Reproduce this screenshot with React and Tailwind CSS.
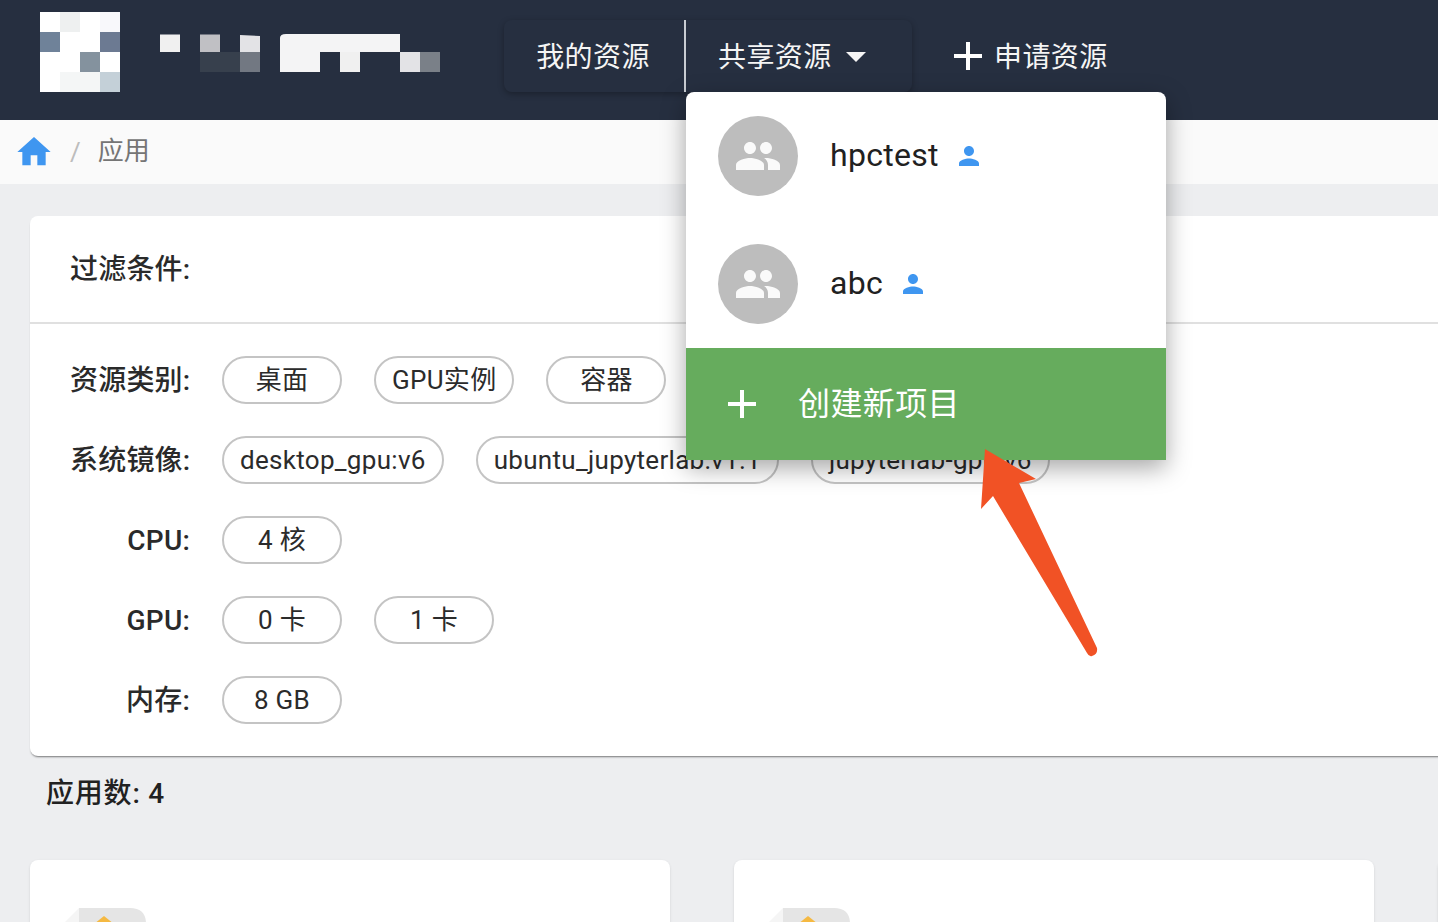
import React from "react";

const font = { fontFamily: 'Roboto, "Noto Sans CJK SC", sans-serif' };
const Logo = () => (
  <svg width="80" height="80" viewBox="0 0 80 80" className="shrink-0">
    <rect width="80" height="80" fill="#fff" />
    <rect x="20" width="20" height="20" fill="#eef0f0" />
    <rect x="60" width="20" height="20" fill="#f8f8fb" />
    <rect y="20" width="20" height="20" fill="#6f8299" />
    <rect x="60" y="20" width="20" height="20" fill="#6c7a92" />
    <rect x="40" y="40" width="20" height="20" fill="#84929e" />
    <rect x="20" y="60" width="40" height="20" fill="#f4f6f6" />
    <rect x="60" y="60" width="20" height="20" fill="#c4d0d8" />
  </svg>
);
const Brand = () => (
  <svg width="280" height="40" viewBox="0 0 280 40" className="shrink-0">
    <rect x="0" y="2.5" width="20" height="17.5" fill="#f0f0f0" />
    <rect x="40" y="2.5" width="20" height="17.5" fill="#c0c0c4" />
    <path d="M80 3L100 4V20H80z" fill="#e3e3e6" />
    <rect x="40" y="20" width="40" height="20" fill="#37404d" />
    <rect x="80" y="20" width="20" height="20" fill="#727882" />
    <path d="M120 6q0-4 6-4h114v18h-80v20h-40z" fill="#f4f4f5" />
    <rect x="180" y="20" width="20" height="20" fill="#f0f0f0" />
    <rect x="240" y="20" width="20" height="20" fill="#e3e3e6" />
    <rect x="260" y="20" width="20" height="20" fill="#7a8088" />
  </svg>
);
const Plus = ({ size = 28, t = 4 }) => (
  <svg width={size} height={size} viewBox={`0 0 ${size} ${size}`} className="shrink-0">
    <rect x="0" y={(size - t) / 2} width={size} height={t} fill="#fff" />
    <rect x={(size - t) / 2} y="0" width={t} height={size} fill="#fff" />
  </svg>
);
const Group = () => (
  <svg width="48" height="48" viewBox="0 0 24 24" fill="#fafafa">
    <path d="M16 11c1.66 0 2.99-1.34 2.99-3S17.66 5 16 5c-1.66 0-3 1.34-3 3s1.34 3 3 3zm-8 0c1.66 0 2.99-1.34 2.99-3S9.66 5 8 5C6.34 5 5 6.34 5 8s1.34 3 3 3zm0 2c-2.33 0-7 1.17-7 3.5V19h14v-2.5c0-2.33-4.67-3.5-7-3.5zm8 0c-.29 0-.62.02-.97.05 1.16.84 1.97 1.97 1.97 3.45V19h6v-2.5c0-2.33-4.67-3.5-7-3.5z" />
  </svg>
);
const Person = () => (
  <svg width="30" height="30" viewBox="0 0 24 24" fill="#3f96f0">
    <path d="M12 12c2.21 0 4-1.79 4-4s-1.79-4-4-4-4 1.79-4 4 1.79 4 4 4zm0 2c-2.67 0-8 1.34-8 4v2h16v-2c0-2.66-5.33-4-8-4z" />
  </svg>
);
const Chip = ({ children }) => (
  <div className="h-12 min-w-[120px] px-4 rounded-3xl border-2 border-[#c4c4c4] flex items-center justify-center text-[26px] tracking-[0.3px] text-[#2b2b2b] whitespace-nowrap">
    {children}
  </div>
);
const Row = ({ label, items }) => (
  <div className="flex items-center gap-8">
    <div className="w-[120px] pt-[2px] text-right text-[28px] tracking-[0.2px] font-medium text-[#2a2a2a] whitespace-nowrap">{label}</div>
    <div className="flex gap-8">
      {items.map((i) => (
        <Chip key={i}>{i}</Chip>
      ))}
    </div>
  </div>
);
const MenuItem = ({ name }) => (
  <div className="h-32 pl-8 flex items-center">
    <div className="w-20 h-20 rounded-full bg-[#bdbdbd] flex items-center justify-center">
      <Group />
    </div>
    <span className="ml-8 pb-[2px] text-[32px] tracking-[0.3px] text-[#212121]">{name}</span>
    <span className="ml-[15px] flex"><Person /></span>
  </div>
);
const FileCard = () => (
  <div className="w-[640px] h-[200px] shrink-0 bg-white rounded-lg shadow-sm pt-12 pl-[34px]">
    <svg width="82" height="40" viewBox="0 0 82 40">
      <path d="M15 0H66q16 0 16 16V40H15z" fill="#e5e5e5" />
      <path d="M15 0V40H0V15z" fill="#f5f5f5" />
      <path d="M40 8l10 8H30z" fill="#f5b942" />
    </svg>
  </div>
);

export default function App() {
  return (
    <div className="relative w-[1438px] h-[922px] overflow-hidden bg-[#edeef0]" style={font}>
      <header className="h-[120px] bg-[#262f40] flex">
        <div className="ml-10 mt-3 flex shrink-0">
          <Logo />
          <div className="ml-10 mt-5"><Brand /></div>
        </div>
        <nav className="ml-16 mt-5 h-[72px] flex text-[28px] tracking-[0.4px] text-[#f5f5f5]">
          <div className="flex rounded-lg shadow-[0_2px_6px_rgba(0,0,0,0.3)]">
            <div className="w-[182px] pt-1 pr-[2px] flex items-center justify-center border-r-[2px] border-[#c8ccd2]">我的资源</div>
            <div className="relative w-[226px] flex items-center pl-8">
              <span className="pt-1">共享资源</span>
              <svg width="20" height="12" viewBox="0 0 20 12" className="ml-[14px] mt-[2px]"><path d="M0 1h20L10 11z" fill="#f5f5f5" /></svg>
              <div className="absolute top-full left-0 w-[480px] tracking-normal bg-white rounded-t-lg shadow-[0_8px_24px_rgba(0,0,0,0.35)] z-10">
                <MenuItem name="hpctest" />
                <MenuItem name="abc" />
                <div className="h-28 bg-[#66ac5d] flex items-center pl-[42px] text-white">
                  <Plus />
                  <span className="ml-[42px] text-[32px] tracking-[0.4px]">创建新项目</span>
                </div>
              </div>
            </div>
          </div>
          <div className="ml-[42px] flex items-center">
            <Plus />
            <span className="ml-[12px] pt-1">申请资源</span>
          </div>
        </nav>
      </header>

      <div className="h-16 bg-[#fafafa] flex items-center pl-[14px] text-[26px] text-[#757575]">
        <svg width="40" height="40" viewBox="0 0 24 24" fill="#3f96f0"><path d="M10 20v-6h4v6h5v-8h3L12 3 2 12h3v8z" /></svg>
        <span className="ml-[16px] text-[#bdbdbd]">/</span>
        <span className="ml-[17px] pb-[2px]">应用</span>
      </div>

      <section className="ml-[30px] mt-8 w-[1500px] bg-white rounded-lg shadow-[0_2px_2px_-1px_rgba(0,0,0,0.5)]">
        <div className="h-[108px] pl-10 pt-[2px] flex items-center border-b-2 border-[#e0e0e0] text-[28px] tracking-[0.2px] font-medium text-[#2a2a2a]">过滤条件:</div>
        <div className="pl-10 py-8 flex flex-col gap-8">
          <Row label="资源类别:" items={["桌面", "GPU实例", "容器"]} />
          <Row label="系统镜像:" items={["desktop_gpu:v6", "ubuntu_jupyterlab:v1.1", "jupyterlab-gpu:v6"]} />
          <Row label="CPU:" items={["4 核"]} />
          <Row label="GPU:" items={["0 卡", "1 卡"]} />
          <Row label="内存:" items={["8 GB"]} />
        </div>
      </section>

      <div className="ml-[46px] mt-5 pb-[2px] -mb-[2px] text-[28px] tracking-[0.8px] font-medium leading-[36px] text-[#212121]">应用数: 4</div>

      <div className="ml-[30px] mt-12 flex gap-16">
        <FileCard />
        <FileCard />
        <FileCard />
      </div>

      <svg className="absolute left-0 top-0 z-20 pointer-events-none" width="1438" height="922" viewBox="0 0 1438 922">
        <path d="M985 449L1036 479L1019 483L1097 648Q1098 654 1092 656Q1089 657 1087 653L993 496L981 509Z" fill="#f15225" />
      </svg>
    </div>
  );
}
